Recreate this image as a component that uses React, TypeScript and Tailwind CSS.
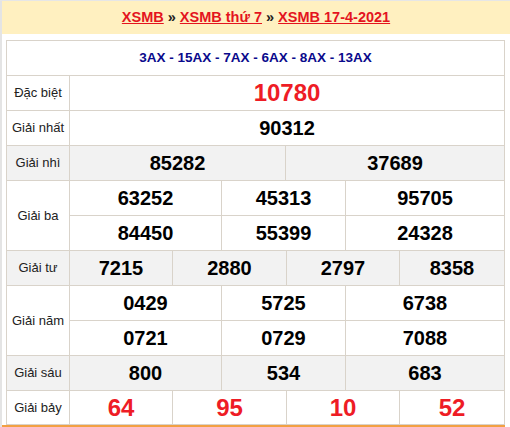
import React from "react";

const B = "border-[#d9d3ca]";

type Cell = { v: string; w: number; red?: boolean };

function DataRow({ cells, gray, h = 35 }: { cells: Cell[]; gray?: boolean; h?: number }) {
  return (
    <div className={`flex ${gray ? "bg-[#f2f2f2]" : "bg-white"}`} style={{ height: h }}>
      {cells.map((c, i) => (
        <div
          key={i}
          className={`flex items-center justify-center border-r border-b ${B} font-bold ${
            c.red ? "text-[24px] text-[#ee1c25]" : "text-[20px] text-black"
          }`}
          style={{ width: c.w }}
        >
          {c.v}
        </div>
      ))}
    </div>
  );
}

function Prize({
  label,
  rows,
  gray,
  lastH,
}: {
  label: string;
  rows: Cell[][];
  gray?: boolean;
  lastH?: number;
}) {
  return (
    <div className={`flex ${gray ? "bg-[#f2f2f2]" : "bg-white"}`}>
      <div
        className={`w-[63px] shrink-0 flex items-center justify-center border-r border-b ${B} text-[13px] text-[#222]`}
      >
        {label}
      </div>
      <div className="flex flex-col">
        {rows.map((r, i) => (
          <DataRow key={i} cells={r} gray={gray} h={i === rows.length - 1 && lastH ? lastH : 35} />
        ))}
      </div>
    </div>
  );
}

const one = (v: string, red?: boolean): Cell[] => [{ v, w: 435, red }];
const two = (a: string, b: string): Cell[] => [
  { v: a, w: 216 },
  { v: b, w: 219 },
];
const three = (a: string, b: string, c: string): Cell[] => [
  { v: a, w: 152 },
  { v: b, w: 124 },
  { v: c, w: 159 },
];
const four = (a: string, b: string, c: string, d: string, red?: boolean): Cell[] => [
  { v: a, w: 103, red },
  { v: b, w: 114, red },
  { v: c, w: 113, red },
  { v: d, w: 105, red },
];

export default function App() {
  return (
    <div
      className="w-[510px] h-[427px] overflow-hidden bg-white border-t border-[#e6e6e6]"
      style={{ fontFamily: '"Liberation Sans", Arial, sans-serif' }}
    >
      <div className="border-l-2 border-[#e4e4e4]">
        <div className="h-[33px] bg-[#fff0c0] flex items-center justify-center text-[14.5px] font-bold text-[#e4141e]">
          <a className="underline">XSMB</a>
          <span className="text-[#222] mx-[4px]">»</span>
          <a className="underline">XSMB thứ 7</a>
          <span className="text-[#222] mx-[4px]">»</span>
          <a className="underline">XSMB 17-4-2021</a>
        </div>
        <div className="w-[503px] pt-[6px] pl-[4px] border-b-2 border-[#f2a043]">
          <div className={`w-[499px] border-l border-t ${B}`}>
            <div
              className={`h-[35px] flex items-center justify-center border-r border-b ${B} text-[13.5px] font-bold text-[#0a0a8c]`}
            >
              3AX - 15AX - 7AX - 6AX - 8AX - 13AX
            </div>
            <Prize label="Đặc biệt" rows={[one("10780", true)]} />
            <Prize label="Giải nhất" rows={[one("90312")]} />
            <Prize label="Giải nhì" gray rows={[two("85282", "37689")]} />
            <Prize
              label="Giải ba"
              rows={[three("63252", "45313", "95705"), three("84450", "55399", "24328")]}
            />
            <Prize label="Giải tư" gray rows={[four("7215", "2880", "2797", "8358")]} />
            <Prize
              label="Giải năm"
              rows={[three("0429", "5725", "6738"), three("0721", "0729", "7088")]}
            />
            <Prize label="Giải sáu" gray rows={[three("800", "534", "683")]} />
            <Prize label="Giải bảy" rows={[four("64", "95", "10", "52", true)]} lastH={34} />
          </div>
        </div>
      </div>
    </div>
  );
}
